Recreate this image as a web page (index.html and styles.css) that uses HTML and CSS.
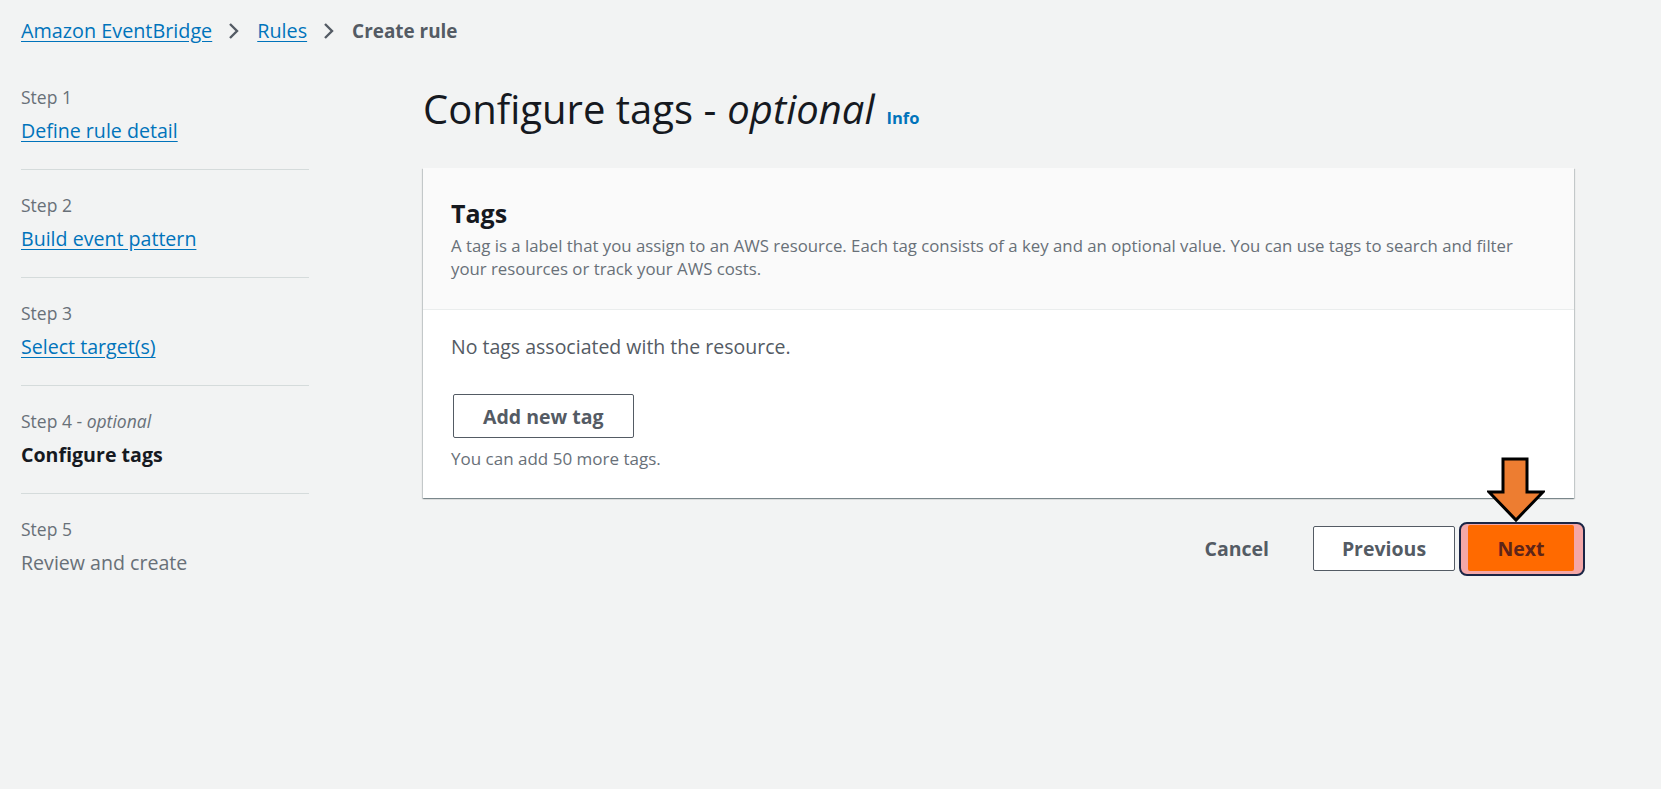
FILE: index.html
```html
<!DOCTYPE html>
<html lang="en">
<head>
<meta charset="utf-8">
<title>Create rule - Amazon EventBridge</title>
<link rel="stylesheet" href="styles.css">
</head>
<body>
<div class="page">
  <nav class="crumbs">
    <a class="crumb-link" href="#">Amazon EventBridge</a>
    <svg class="chev" width="12" height="18" viewBox="0 0 12 18"><polyline points="2,2 9,9 2,16" fill="none" stroke="#545b64" stroke-width="2.4"/></svg>
    <a class="crumb-link" href="#">Rules</a>
    <svg class="chev" width="12" height="18" viewBox="0 0 12 18"><polyline points="2,2 9,9 2,16" fill="none" stroke="#545b64" stroke-width="2.4"/></svg>
    <span class="crumb-current">Create rule</span>
  </nav>
  <div class="layout">
    <aside class="steps">
      <ol class="step-list">
        <li class="step"><span class="step-label">Step 1</span><a class="step-link" href="#">Define rule detail</a></li>
        <li class="step"><span class="step-label">Step 2</span><a class="step-link" href="#">Build event pattern</a></li>
        <li class="step"><span class="step-label">Step 3</span><a class="step-link" href="#">Select target(s)</a></li>
        <li class="step"><span class="step-label">Step 4 - <i>optional</i></span><span class="step-current">Configure tags</span></li>
        <li class="step last"><span class="step-label">Step 5</span><span class="step-disabled">Review and create</span></li>
      </ol>
    </aside>
    <main class="content">
      <h1 class="title">Configure tags - <i>optional</i><a class="info" href="#">Info</a></h1>
      <section class="card">
        <header class="card-head">
          <h2 class="card-title">Tags</h2>
          <p class="card-desc">A tag is a label that you assign to an AWS resource. Each tag consists of a key and an optional value. You can use tags to search and filter your resources or track your AWS costs.</p>
        </header>
        <div class="card-body">
          <p class="empty">No tags associated with the resource.</p>
          <button class="btn btn-normal btn-add">Add new tag</button>
          <p class="hint">You can add 50 more tags.</p>
        </div>
      </section>
      <div class="actions">
        <button class="btn btn-link">Cancel</button>
        <button class="btn btn-normal btn-prev">Previous</button>
        <span class="focus">
          <button class="btn btn-primary">Next</button>
          <svg class="arrow" width="58" height="66" viewBox="0 0 58 66"><polygon points="16,2 40,2 40,35 56,35 29,63 2,35 16,35" fill="#ed7d31" stroke="#000" stroke-width="3" stroke-linejoin="miter"/></svg>
        </span>
      </div>
    </main>
  </div>
</div>
</body>
</html>
```

FILE: styles.css
```css
* { box-sizing: border-box; }
html, body { margin: 0; padding: 0; }
body {
  background: #f2f3f3;
  font-family: "Open Sans", "Noto Sans", sans-serif;
  color: #16191f;
  width: 1661px;
  height: 789px;
  overflow: hidden;
}
.page { padding: 19px 0 0 0; }
.crumbs {
  display: flex;
  align-items: center;
  padding-left: 21px;
  height: 24px;
  font-size: 19.8px;
  line-height: 24px;
}
.crumb-link { color: #0073bb; text-decoration: underline; text-underline-offset: 3px; }
.chev { margin: 0 17px 0 16px; }
.crumb-current { color: #545b64; font-weight: 700; font-size: 18.9px; }

.layout {
  display: grid;
  grid-template-columns: 288px 1fr;
  column-gap: 114px;
  padding: 0 87px 0 21px;
}
.step-list { list-style: none; margin: 0; padding: 44px 0 0 0; }
.step {
  display: flex;
  flex-direction: column;
  padding: 0 0 26px 0;
  margin-bottom: 25px;
  border-bottom: 1px solid #d5dbdb;
}
.step.last { border-bottom: none; }
.step-label { font-size: 17.5px; line-height: 21px; color: #687078; margin-bottom: 11px; }
.step-link, .step-current, .step-disabled { font-size: 19.6px; line-height: 24px; }
.step-link { color: #0073bb; text-decoration: underline; text-underline-offset: 3px; }
.step-current { font-weight: 700; color: #16191f; }
.step-disabled { color: #687078; }

.content { padding-top: 44px; }
.title {
  margin: 0;
  font-size: 40px;
  line-height: 44px;
  font-weight: 400;
  color: #16191f;
  display: flex;
  align-items: baseline;
}
.title i { margin-left: 11px; }
.info {
  font-size: 16.5px;
  font-weight: 700;
  color: #0073bb;
  text-decoration: none;
  margin-left: 12px;
}
.card {
  margin-top: 28px;
  background: #fff;
  box-shadow: 0 1px 1px 0 rgba(0,28,36,0.3), 1px 1px 1px 0 rgba(0,28,36,0.15), -1px 1px 1px 0 rgba(0,28,36,0.15);
}
.card-head {
  background: #fafafa;
  border-bottom: 1px solid #eaeded;
  padding: 31px 30px 29px 28px;
}
.card-title { margin: 0; font-size: 25px; line-height: 28px; font-weight: 700; color: #16191f; }
.card-desc { margin: 7px 0 0 0; font-size: 16.8px; line-height: 23px; color: #687078; }
.card-body { padding: 25px 28px 29px 28px; }
.empty { margin: 0; font-size: 19.5px; line-height: 24px; color: #545b64; }
.hint { margin: 11px 0 0 0; font-size: 17px; line-height: 20px; color: #687078; }

.btn {
  font-family: inherit;
  font-weight: 700;
  font-size: 19.5px;
  border-radius: 2px;
  cursor: pointer;
}
.btn-normal {
  margin-top: 35px;
  height: 44px;
  padding: 0 29px;
  background: #fff;
  color: #545b64;
  border: 1px solid #545b64;
}
.btn-add { margin-left: 2px; }
.actions {
  display: flex;
  justify-content: flex-end;
  align-items: center;
  margin-top: 27px;
}
.btn-link {
  background: none;
  border: none;
  color: #545b64;
  padding: 0 20px;
  height: 45px;
  margin-right: 24px;
}
.btn-prev { margin-top: 0; height: 45px; width: 142px; padding: 0; }
.focus {
  position: relative;
  display: inline-flex;
  margin-left: 13px;
}
.focus::before {
  content: "";
  position: absolute;
  left: -9px; right: -11px; top: -3px; bottom: -5px;
  background: #f4a7a7;
  border: 2px solid #1b2545;
  border-radius: 8px;
}
.btn-primary {
  position: relative;
  height: 46px;
  width: 106px;
  padding: 0;
  background: #ff6a00;
  border: none;
  color: #5e2418;
}
.arrow {
  position: absolute;
  left: 19px;
  top: -68px;
}
```
